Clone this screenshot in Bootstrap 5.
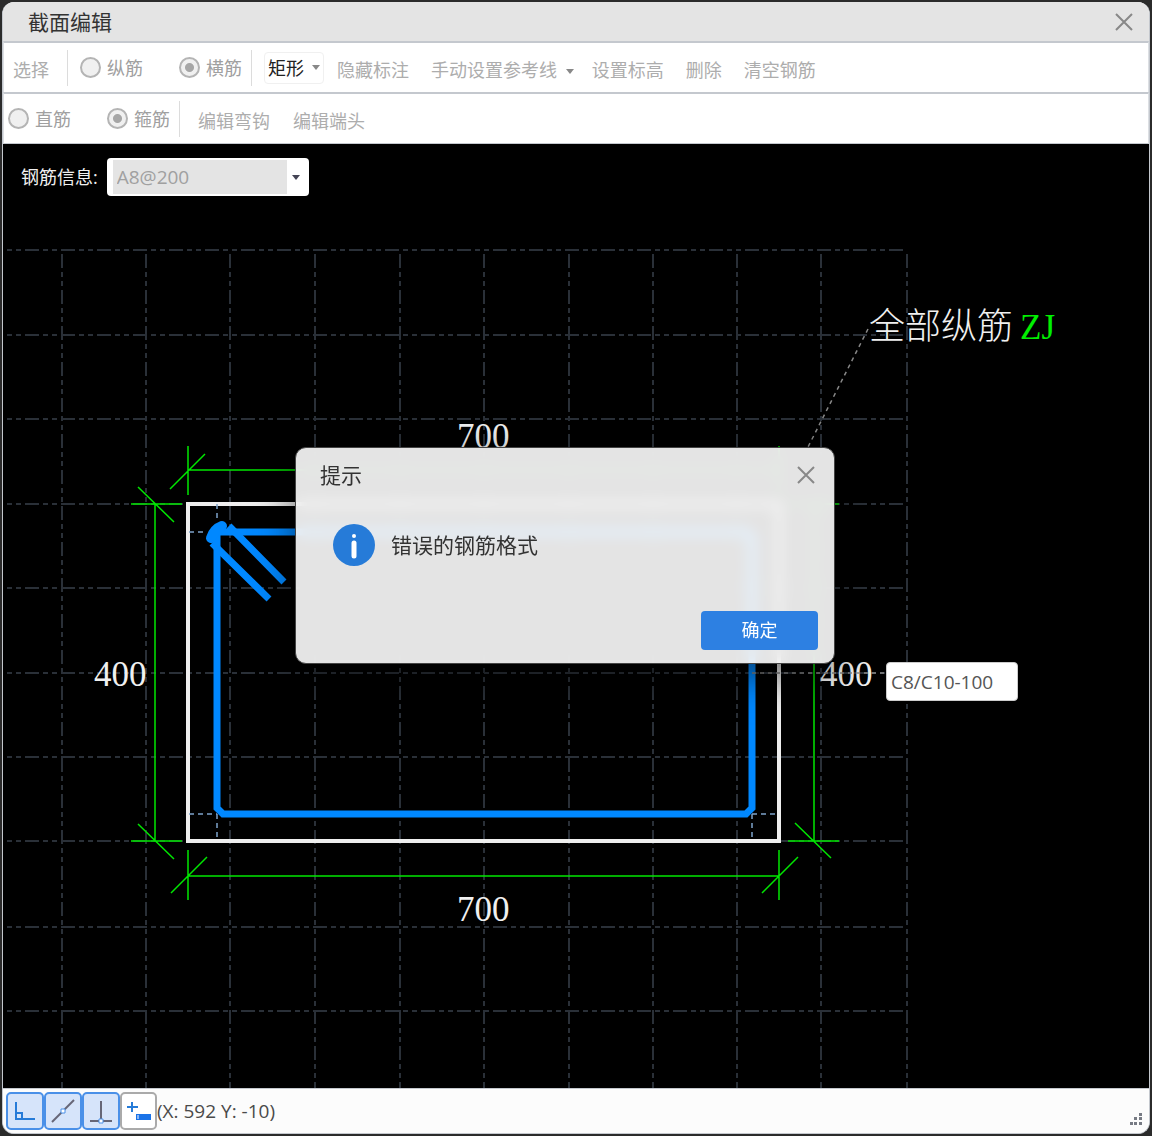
<!DOCTYPE html>
<html lang="zh-CN">
<head>
<meta charset="utf-8">
<meta name="viewport" content="width=device-width, initial-scale=1">
<title>截面编辑</title>
<link href="https://cdn.jsdelivr.net/npm/bootstrap@5.3.0/dist/css/bootstrap.min.css" rel="stylesheet">
<style>
  body { background: #2b2b2b; font: 18px/24px "Open Sans", "Noto Sans CJK SC", sans-serif; color: #333; }
  .app-window { min-height: 100vh; padding: 2px; }
  .frame { border-radius: 12px; background: #fcfcfc; border: 1px solid #c4c8ce; border-top: 0; overflow: hidden; }
  .title-bar { height: 39px; background: #e4e4e4; padding: 0 15px 0 25px; }
  .heading { font-size: 21px; line-height: 28px; font-weight: 400; }
  .plain-btn { border: 0; background: none; padding: 0; color: inherit; white-space: nowrap; }
  .tool-row { height: 51px; background: #fff; border-top: 2px solid #c4c8ce; border-left: 1px solid #dcdfe3; border-right: 1px solid #dcdfe3; }
  .tool-row + .tool-row { height: 52px; border-bottom: 1px solid #c4c8ce; }
  .tool-btn { color: #adadad; padding-top: 4px; }
  .tool-btn:disabled { color: #adadad; }
  .pick-btn { margin-left: 9px; margin-right: 18px; }
  .caret { display: inline-block; border: 4px solid transparent; border-top: 5px solid #888; border-bottom: 0; vertical-align: middle; }
  .divider { width: 1px; height: 36px; background: #dcdcdc; }
  .choice { display: flex; align-items: center; gap: 6px; color: #a0a0a0; }
  .choice + .choice { margin-left: 36px; margin-right: 9px; }
  .choice input { appearance: none; width: 21px; height: 21px; margin: 0; border: 2px solid #b4b4b4; border-radius: 50%; background: #f0f0f0; }
  .choice input:checked { background: radial-gradient(circle, #a6a6a6 0 4px, #f0f0f0 5px); }
  .shape-btn { width: 60px; height: 32px; border: 1px solid #f0f0f0; border-radius: 4px; color: #222; padding: 0 3px; }
  .tool-list { gap: 22px; margin-left: 13px; }
  .tool-list .caret { margin-right: -4px; vertical-align: 3px; }
  .hook-tools { gap: 23px; margin-left: 18px; }
  .drawing-area { background: #000; min-height: 900px; }
  .drawing { position: absolute; left: 0; top: 0; width: 1148px; height: 944px; }
  .drawing text { font: 300 35px "Liberation Serif", "Noto Sans CJK SC", serif; fill: #f0f0f0; }
  .drawing .note-text { font-size: 36px; }
  .drawing .rebar-code { fill: #00f000; }
  .info-bar { position: relative; padding: 14px 18px; gap: 9px; color: #f0f0f0; }
  .combo { position: relative; width: 202px; height: 38px; }
  .combo select { appearance: none; width: 100%; height: 100%; font-size: 19px; color: #a0a0a0; opacity: 1; border: 0; border-radius: 4px; padding: 0 10px;
    background: linear-gradient(#e4e4e4, #e4e4e4) 6px 2px / 174px 34px no-repeat #fff; }
  .combo .caret { position: absolute; right: 9px; top: 17px; border-top-color: #445; }
  .rebar-input { position: absolute; left: 883px; top: 518px; width: 132px; height: 39px; font-size: 19px; color: #555; background: #fff; border: 1px solid #ccc; border-radius: 4px; padding: 0 4px; }
  .message-box { position: absolute; left: 292px; top: 303px; width: 540px; height: 217px; border: 1px solid #444; border-radius: 11px; background: rgba(255,255,255,.894); backdrop-filter: blur(7px); box-shadow: 0 12px 40px rgba(0,0,0,.55); padding: 13px 16px 13px 24px; }
  .message-body { padding-left: 12px; gap: 16px; margin-top: 34px; }
  .ok-btn { width: 117px; height: 39px; padding: 0; font-size: 18px; border: 0; border-radius: 4px; background: #2d80e2; }
  .status-bar { height: 45px; background: #fcfcfc; padding: 0 6px 0 3px; border-top: 1px solid #c4c8ce; }
  .snap-btn { width: 38px; height: 38px; padding: 0; border: 2px solid #4a90e8; border-radius: 5px; background: #d6e4fa; display: grid; place-items: center; }
  .snap-btn.snap-off { width: 37px; border-color: #aaa; background: #fff; }
  .coords { font-size: 19px; color: #4a4a4a; }
</style>
<script src="https://cdn.jsdelivr.net/npm/bootstrap@5.3.0/dist/js/bootstrap.bundle.min.js"></script>
</head>
<body>
<div class="app-window d-flex flex-column">
 <main class="frame d-flex flex-column flex-grow-1">
  <header class="title-bar d-flex align-items-center justify-content-between">
    <h1 class="heading m-0">截面编辑</h1>
    <button class="plain-btn d-flex" aria-label="关闭"><svg width="20" height="20" fill="none" stroke="#888" stroke-width="2"><path d="M2 2 18 18M18 2 2 18"/></svg></button>
  </header>

  <div class="tool-row d-flex align-items-center">
    <button class="plain-btn tool-btn pick-btn" disabled>选择</button>
    <span class="divider me-2"></span>
    <label class="choice ms-1"><input type="radio" name="direction" disabled>纵筋</label>
    <label class="choice"><input type="radio" name="direction" checked disabled>横筋</label>
    <span class="divider me-2"></span>
    <button class="plain-btn shape-btn d-flex align-items-center justify-content-between ms-1">矩形 <span class="caret"></span></button>
    <div class="tool-list d-flex">
      <button class="plain-btn tool-btn" disabled>隐藏标注</button>
      <button class="plain-btn tool-btn" disabled>手动设置参考线 <span class="caret ms-1"></span></button>
      <button class="plain-btn tool-btn" disabled>设置标高</button>
      <button class="plain-btn tool-btn" disabled>删除</button>
      <button class="plain-btn tool-btn" disabled>清空钢筋</button>
    </div>
  </div>

  <div class="tool-row d-flex align-items-center">
    <label class="choice ms-1"><input type="radio" name="kind" disabled>直筋</label>
    <label class="choice"><input type="radio" name="kind" checked disabled>箍筋</label>
    <span class="divider"></span>
    <div class="hook-tools d-flex">
      <button class="plain-btn tool-btn" disabled>编辑弯钩</button>
      <button class="plain-btn tool-btn" disabled>编辑端头</button>
    </div>
  </div>

  <section class="drawing-area position-relative flex-grow-1 overflow-hidden">
    <svg class="drawing" viewBox="3 144 1148 944" fill="none">
      <g stroke="#2a3038" stroke-width="2" stroke-dasharray="14 4 5 4 5 4">
        <path stroke-dashoffset="16" d="M5 250H906M5 335H906M5 419H906M5 504H906M5 588H906M5 673H906M5 757H906M5 841H906M5 927H906M5 1011H906"/>
        <path d="M62 254V1088M146 254V1088M230 254V1088M315 254V1088M400 254V1088M484 254V1088M569 254V1088M653 254V1088M737 254V1088M821 254V1088M907 254V1088"/>
      </g>
      <rect x="188" y="504" width="591" height="337" stroke="#eee" stroke-width="4"/>
      <g stroke="#0088ff" stroke-width="7">
        <path d="M217 530V808L223 814H746L752 808V540Q752 532 744 532H217"/>
        <path d="M211 538Q214 529 222 526" stroke-width="10" stroke-linecap="round"/>
        <path d="M212 543 269 599M229 526 284 582"/>
      </g>
      <path stroke="#7ea2ca" stroke-width="1.5" stroke-dasharray="5 4" d="M189 532H207M217 504V522M189 814H217M217 814V841M752 814H779M752 814V841"/>
      <path stroke="#00e800" stroke-width="1.5" d="M188 470H779M188 446V495M779 446V495M170 489 205 454M155 504V841M131 504H182M131 841H182M138 487 174 522M138 824 174 859M188 876H779M188 850V900M779 850V900M171 893 207 857M762 893 798 857M814 504V841M788 504H839M788 841H839M795 823 831 858"/>
      <path stroke="#888" stroke-width="1.5" stroke-dasharray="4 4" d="M868 329 808 447"/>
      <text x="457" y="448">700</text>
      <text x="457" y="921">700</text>
      <text x="94" y="686">400</text>
      <text x="820" y="686">400</text>
      <path stroke="#888" stroke-width="1.5" stroke-dasharray="4 4" d="M752 673H885"/>
      <text x="869" y="339" class="note-text">全部纵筋</text>
      <text x="1020" y="339" class="rebar-code">ZJ</text>
    </svg>

    <div class="info-bar d-flex align-items-center">
      <label for="rebarInfo">钢筋信息:</label>
      <div class="combo"><select id="rebarInfo" disabled><option>A8@200</option></select><span class="caret"></span></div>
    </div>

    <input class="rebar-input" type="text" value="C8/C10-100" aria-label="钢筋">

    <div class="message-box d-flex flex-column" role="dialog" aria-labelledby="messageTitle">
      <div class="d-flex align-items-center justify-content-between">
        <h2 class="heading m-0" id="messageTitle">提示</h2>
        <button class="plain-btn d-flex" aria-label="关闭提示"><svg width="24" height="20" fill="none" stroke="#888" stroke-width="2"><path d="M4 2 20 18M20 2 4 18"/></svg></button>
      </div>
      <div class="message-body d-flex align-items-center">
        <svg width="43" height="43"><circle cx="22" cy="22" r="21" fill="#267bd8"/><circle cx="22" cy="13" r="2" fill="#fff"/><path d="M22 20V33" stroke="#fff" stroke-width="5" stroke-linecap="round"/></svg>
        <p class="heading m-0">错误的钢筋格式</p>
      </div>
      <button class="btn btn-primary ok-btn mt-auto align-self-end">确定</button>
    </div>
  </section>

  <footer class="status-bar d-flex align-items-center">
    <button class="snap-btn" aria-label="正交"><svg width="24" height="24" fill="none" stroke="#267bd8" stroke-width="2"><path d="M3 3V20H22M3 14H9V20"/></svg></button>
    <button class="snap-btn" aria-label="中点"><svg width="26" height="26" fill="none" stroke="#667" stroke-width="2"><path d="M2 24 24 2"/><path d="M11 11H15V15H11Z" fill="#fff" stroke="#4a90e8" stroke-width="1"/></svg></button>
    <button class="snap-btn" aria-label="垂点"><svg width="24" height="26" fill="none" stroke="#667" stroke-width="2"><path d="M12 3V23M1 23H23"/><path d="M10 21H14V25H10Z" fill="#fff" stroke="#4a90e8" stroke-width="1"/></svg></button>
    <button class="snap-btn snap-off" aria-label="动态输入"><svg width="26" height="24"><path d="M1 8H12M6 3V13" stroke="#267bd8" stroke-width="2"/><path d="M10 15H25V21H10Z" fill="#1a73e8"/><path d="M12 16V20" stroke="#fff"/></svg></button>
    <output class="coords">(X: 592 Y: -10)</output>
    <svg class="ms-auto mt-3" width="14" height="14" fill="#777b84"><path d="M10 1h3v3h-3zM5 5h3v3h-3zM10 5h3v3h-3zM1 10h3v3h-3zM5 10h3v3h-3zM10 10h3v3h-3z"/></svg>
  </footer>
 </main>
</div>
</body>
</html>
